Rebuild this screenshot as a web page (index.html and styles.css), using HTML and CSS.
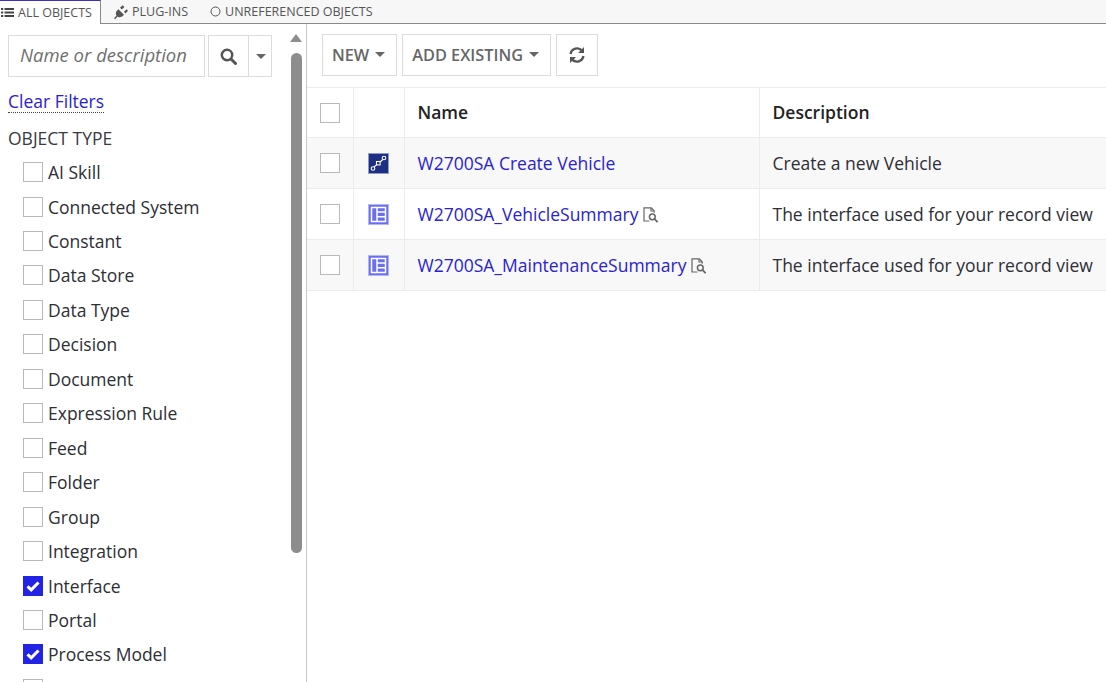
FILE: index.html
```html
<!DOCTYPE html>
<html lang="en">
<head>
<meta charset="utf-8">
<title>Objects</title>
<link rel="stylesheet" href="styles.css">
</head>
<body>
<nav class="tabs">
  <div class="tab tab-active">
    <svg class="tab-icon" viewBox="0 0 13 11" width="13" height="11"><g fill="#444"><rect x="0" y="1" width="2.2" height="2"/><rect x="0" y="4.5" width="2.2" height="2"/><rect x="0" y="8" width="2.2" height="2"/><rect x="3.5" y="1" width="9.5" height="2"/><rect x="3.5" y="4.5" width="9.5" height="2"/><rect x="3.5" y="8" width="9.5" height="2"/></g></svg>
    ALL OBJECTS
  </div>
  <div class="tab">
    <svg class="tab-icon" viewBox="0 0 14 14" width="14" height="14"><g fill="#555"><path d="M0 13.200l2.600-2.600-.5-.6c-.5-2 0-3.500 1-4.500l1.300-1.300 5.600 5.600-1.300 1.300c-1 1-2.600 1.500-4.500 1l-.6-.5L1 14.200z"/><path d="M6 2.800L8.600 .2l1.800 1.800-2.600 2.600zM10 6.800l2.600-2.600 1.400 1.600-2.600 2.600z"/></g></svg>
    PLUG-INS
  </div>
  <div class="tab">
    <svg class="tab-icon" viewBox="0 0 11 11" width="11" height="11"><circle cx="5.5" cy="5.5" r="4.5" fill="none" stroke="#555" stroke-width="1"/></svg>
    UNREFERENCED OBJECTS
  </div>
</nav>

<div class="main">
  <aside class="sidebar">
    <div class="filters">
      <div class="search">
        <div class="search-input">Name or description</div>
        <div class="search-btns">
          <div class="search-btn search-go">
            <svg viewBox="0 0 17 17" width="17" height="17"><circle cx="7" cy="7" r="5.200" fill="none" stroke="#555" stroke-width="2.500"/><path d="M11 11l4.500 4.500" stroke="#555" stroke-width="3" stroke-linecap="round"/></svg>
          </div>
          <div class="search-btn search-more"><span class="caret"></span></div>
        </div>
      </div>
      <a class="clear">Clear Filters</a>
      <div class="type-title">OBJECT TYPE</div>
      <ul class="types">
        <li class="type"><span class="box"></span>AI Skill</li>
        <li class="type"><span class="box"></span>Connected System</li>
        <li class="type"><span class="box"></span>Constant</li>
        <li class="type"><span class="box"></span>Data Store</li>
        <li class="type"><span class="box"></span>Data Type</li>
        <li class="type"><span class="box"></span>Decision</li>
        <li class="type"><span class="box"></span>Document</li>
        <li class="type"><span class="box"></span>Expression Rule</li>
        <li class="type"><span class="box"></span>Feed</li>
        <li class="type"><span class="box"></span>Folder</li>
        <li class="type"><span class="box"></span>Group</li>
        <li class="type"><span class="box"></span>Integration</li>
        <li class="type"><span class="box box-on"><svg viewBox="0 0 20 20" width="20" height="20"><path d="M4.5 10.3l3.7 3.5 7.3-7.3" fill="none" stroke="#fff" stroke-width="3"/></svg></span>Interface</li>
        <li class="type"><span class="box"></span>Portal</li>
        <li class="type"><span class="box box-on"><svg viewBox="0 0 20 20" width="20" height="20"><path d="M4.5 10.3l3.7 3.5 7.3-7.3" fill="none" stroke="#fff" stroke-width="3"/></svg></span>Process Model</li>
        <li class="type"><span class="box"></span></li>
      </ul>
    </div>
    <div class="scrollbar">
      <span class="scroll-up"></span>
      <span class="scroll-thumb"></span>
    </div>
  </aside>

  <section class="content">
    <div class="toolbar">
      <div class="btn">NEW <span class="caret"></span></div>
      <div class="btn">ADD EXISTING <span class="caret"></span></div>
      <div class="btn btn-icon">
        <svg viewBox="0 0 18 18" width="18" height="18"><g fill="none" stroke="#555" stroke-width="2.4"><path d="M2.6 8A6.6 6.6 0 0 1 14 4.6"/><path d="M15.4 10A6.6 6.6 0 0 1 4 13.4"/></g><path d="M16 1v6h-6zM2 17v-6h6z" fill="#555"/></svg>
      </div>
    </div>
    <div class="grid">
      <div class="row row-head">
        <div class="cell cell-check"><span class="box"></span></div>
        <div class="cell cell-icon"></div>
        <div class="cell cell-name">Name</div>
        <div class="cell cell-desc">Description</div>
      </div>
      <div class="row row-alt">
        <div class="cell cell-check"><span class="box"></span></div>
        <div class="cell cell-icon">
          <svg viewBox="0 0 21 21" width="21" height="21"><rect x=".5" y=".5" width="20" height="20" fill="#1d2f83" stroke="#8f9ac6"/><g fill="none" stroke="#fff" stroke-width="1.100"><circle cx="5" cy="15.500" r="1.800"/><rect x="8.500" y="8.500" width="3.600" height="3.400"/><circle cx="16" cy="5" r="1.800"/><path d="M6 14l2.500-2.200M12.100 9l2.700-2.500"/></g></svg>
        </div>
        <div class="cell cell-name"><a class="link">W2700SA Create Vehicle</a></div>
        <div class="cell cell-desc">Create a new Vehicle</div>
      </div>
      <div class="row">
        <div class="cell cell-check"><span class="box"></span></div>
        <div class="cell cell-icon">
          <svg viewBox="0 0 21 21" width="21" height="21"><rect x=".5" y=".5" width="20" height="20" fill="#6a6ff0" stroke="#b3b6f7"/><g fill="none" stroke="#fff" stroke-width="1.500"><rect x="3.500" y="3.500" width="14" height="14"/><path d="M9 3.500v14M9 8h8.500M9 12.800h8.500"/></g></svg>
        </div>
        <div class="cell cell-name"><a class="link">W2700SA_VehicleSummary</a>
          <svg class="doc" viewBox="0 0 16 16" width="16" height="16"><g fill="none" stroke="#666" stroke-width="1.200"><path d="M6.500 14h-5.500V.9h7.300l2.900 2.800v2"/><path d="M8 1v3h3"/><circle cx="9.300" cy="9.800" r="2.900" stroke-width="1.500"/><path d="M11.400 11.900l3.200 3.200" stroke-width="1.800"/></g></svg>
        </div>
        <div class="cell cell-desc">The interface used for your record view</div>
      </div>
      <div class="row row-alt">
        <div class="cell cell-check"><span class="box"></span></div>
        <div class="cell cell-icon">
          <svg viewBox="0 0 21 21" width="21" height="21"><rect x=".5" y=".5" width="20" height="20" fill="#6a6ff0" stroke="#b3b6f7"/><g fill="none" stroke="#fff" stroke-width="1.500"><rect x="3.500" y="3.500" width="14" height="14"/><path d="M9 3.500v14M9 8h8.500M9 12.800h8.500"/></g></svg>
        </div>
        <div class="cell cell-name"><a class="link">W2700SA_MaintenanceSummary</a>
          <svg class="doc" viewBox="0 0 16 16" width="16" height="16"><g fill="none" stroke="#666" stroke-width="1.200"><path d="M6.500 14h-5.500V.9h7.300l2.900 2.800v2"/><path d="M8 1v3h3"/><circle cx="9.300" cy="9.800" r="2.900" stroke-width="1.500"/><path d="M11.400 11.900l3.200 3.200" stroke-width="1.800"/></g></svg>
        </div>
        <div class="cell cell-desc">The interface used for your record view</div>
      </div>
    </div>
  </section>
</div>
</body>
</html>
```

FILE: styles.css
```css
* { box-sizing: border-box; }
html, body { margin: 0; height: 100%; overflow: hidden; background: #fff; }
body {
  display: flex;
  flex-direction: column;
  height: 682px;
  font-family: "Open Sans", "Liberation Sans", sans-serif;
  font-size: 17.5px;
  color: #2e2e35;
}

.tabs {
  display: flex;
  flex: none;
  height: 24px;
  background: #f7f7f7;
  border-bottom: 1px solid #8a8a8a;
  font-size: 12.5px;
  color: #555;
}
.tab {
  display: flex;
  align-items: center;
  gap: 4px;
  height: 23px;
  padding-left: 13px;
  padding-right: 9px;
}
.tab-active {
  width: 101px;
  height: 24px;
  padding: 0 0 0 1px;
  background: #fff;
  border-top: 1px solid #3b35b5;
  border-right: 1px solid #8a8a8a;
  margin-bottom: -1px;
}
.tab-icon { flex: none; }

.main { display: flex; flex: 1; min-height: 0; }

.sidebar {
  display: flex;
  flex: none;
  width: 307px;
  border-right: 1px solid #c9c9c9;
  overflow: hidden;
}
.filters { width: 283px; flex: none; padding: 11px 0 0 8px; }

.search { display: flex; gap: 3px; height: 42px; width: 264px; }
.search-input {
  width: 197px;
  border: 1px solid #dcdcdc;
  padding: 0 0 3px 11px;
  display: flex;
  align-items: center;
  font-style: italic;
  font-size: 18.5px;
  color: #6f6f6f;
  white-space: nowrap;
}
.search-btns { display: flex; border: 1px solid #dcdcdc; flex: 1; }
.search-btn { display: flex; align-items: center; justify-content: center; }
.search-go { width: 40px; border-right: 1px solid #dcdcdc; }
.search-more { flex: 1; padding-left: 2px; }

.caret {
  display: inline-block;
  width: 0;
  height: 0;
  border-left: 5px solid transparent;
  border-right: 5px solid transparent;
  border-top: 5px solid #666;
}

.clear {
  display: block;
  width: max-content;
  margin-top: 13px;
  font-size: 17.500px;
  line-height: 22px;
  color: #2a22d0;
  border-bottom: 1px dotted #444;
}
.type-title { margin-top: 13px; font-size: 17.500px; line-height: 24px; color: #3a3a40; }
.types { list-style: none; margin: 4.870px 0 0; padding: 0 0 0 15px; }
.type {
  display: flex;
  align-items: center;
  gap: 5px;
  height: 34.460px;
  white-space: nowrap;
}

.box {
  flex: none;
  display: block;
  width: 20px;
  height: 20px;
  border: 1px solid #b9b9b9;
  background: #fff;
}
.box-on { border: 0; background: #2323e6; }
.box-on svg { display: block; }

.scrollbar { position: relative; flex: 1; }
.scroll-up {
  position: absolute;
  left: 7px;
  top: 10px;
  border-left: 6px solid transparent;
  border-right: 6px solid transparent;
  border-bottom: 8px solid #8d8d8d;
}
.scroll-thumb {
  position: absolute;
  left: 8px;
  top: 29px;
  width: 11px;
  height: 500px;
  border-radius: 6px;
  background: #8d8d8d;
}

.content { flex: 1; min-width: 0; }
.toolbar { display: flex; gap: 5px; height: 63px; padding: 10px 0 0 15px; }
.btn {
  display: flex;
  align-items: center;
  gap: 6px;
  height: 42px;
  padding: 0 11px 1px 9px;
  border: 1px solid #dcdcdc;
  font-size: 16.300px;
  font-weight: 600;
  color: #666;
  white-space: nowrap;
}
.btn-icon { width: 42px; padding: 0; justify-content: center; }

.grid { border-top: 1px solid #ececec; }
.row {
  display: flex;
  height: 51px;
  border-bottom: 1px solid #ececec;
}
.row-head { height: 50px; font-weight: 600; color: #222; }
.row-head .cell-name, .row-head .cell-desc { padding-bottom: 2px; }
.row-alt { background: #f8f8f8; }
.cell {
  display: flex;
  align-items: center;
  flex: none;
  border-right: 1px solid #ececec;
  white-space: nowrap;
}
.cell-check { width: 47px; padding-left: 13px; }
.cell-icon { width: 51px; padding-left: 14px; }
.cell-name { width: 355px; padding-left: 12.500px; gap: 5px; }
.cell-desc { flex: 1; border-right: 0; padding-left: 12.500px; }
.link { color: #2a22d0; }
.doc { flex: none; margin-top: 2px; }
```
